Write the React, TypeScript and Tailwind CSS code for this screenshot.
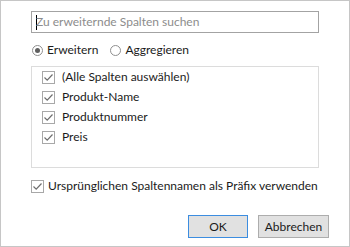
import React from "react";

const font = { fontFamily: 'Lato, "Noto Sans", sans-serif' };

function Check() {
  return (
    <span className="flex h-[13px] w-[13px] shrink-0 items-center justify-center border border-[#a8a8a8] bg-white">
      <svg width="11" height="11" viewBox="0 0 11 11">
        <path d="M1.5 5.5 L4.2 8.2 L9.5 2.5" fill="none" stroke="#6e6e6e" strokeWidth="1.2" />
      </svg>
    </span>
  );
}

function Row({ label }: { label: string }) {
  return (
    <div className="flex h-[20px] items-center gap-[7px]">
      <Check />
      <span className="whitespace-nowrap text-[12px] leading-none text-[#1b1b1b]">{label}</span>
    </div>
  );
}

export default function App() {
  return (
    <div
      style={font}
      className="flex h-[247px] w-[350px] flex-col border border-[#c6c6c6] bg-white pl-[30px] pr-[30px]"
    >
      <div className="mt-[10px] flex h-[22px] w-[288px] items-center border border-[#a3a3a3] pl-[4px]">
        <span className="mr-[-1px] h-[15px] w-px bg-black" />
        <span className="whitespace-nowrap text-[12px] leading-none text-[#8c8c8c]">Zu erweiternde Spalten suchen</span>
      </div>
      <div className="mt-[9px] flex h-[16px] items-center whitespace-nowrap text-[12px] leading-none text-[#1b1b1b]">
        <span className="ml-[1px] flex h-[11px] w-[11px] items-center justify-center rounded-full border border-[#8f8f8f]">
          <span className="h-[5px] w-[5px] rounded-full bg-[#5f5f5f]" />
        </span>
        <span className="ml-[4px]">Erweitern</span>
        <span className="ml-[12px] h-[11px] w-[11px] rounded-full border border-[#8f8f8f]" />
        <span className="ml-[4px]">Aggregieren</span>
      </div>
      <div className="mt-[8px] flex h-[102px] w-[288px] flex-col border border-[#dcdcdc] pl-[10px]">
        <Row label="(Alle Spalten auswählen)" />
        <Row label="Produkt-Name" />
        <Row label="Produktnummer" />
        <Row label="Preis" />
      </div>
      <div className="mt-[10px] flex h-[16px] items-center gap-[4px]">
        <Check />
        <span className="whitespace-nowrap text-[12px] leading-none text-[#1b1b1b]">
          Ursprünglichen Spaltennamen als Präfix verwenden
        </span>
      </div>
      <div className="mr-[-10px] mt-[21px] flex justify-end gap-[10px]">
        <button className="flex h-[23px] w-[60px] items-center justify-center border border-[#3c8de0] bg-[#e1e1e1] text-[12px] leading-none text-[#1b1b1b]">
          OK
        </button>
        <button className="flex h-[23px] w-[71px] items-center justify-center border border-[#adadad] bg-[#e1e1e1] text-[12px] leading-none text-[#1b1b1b]">
          Abbrechen
        </button>
      </div>
    </div>
  );
}
